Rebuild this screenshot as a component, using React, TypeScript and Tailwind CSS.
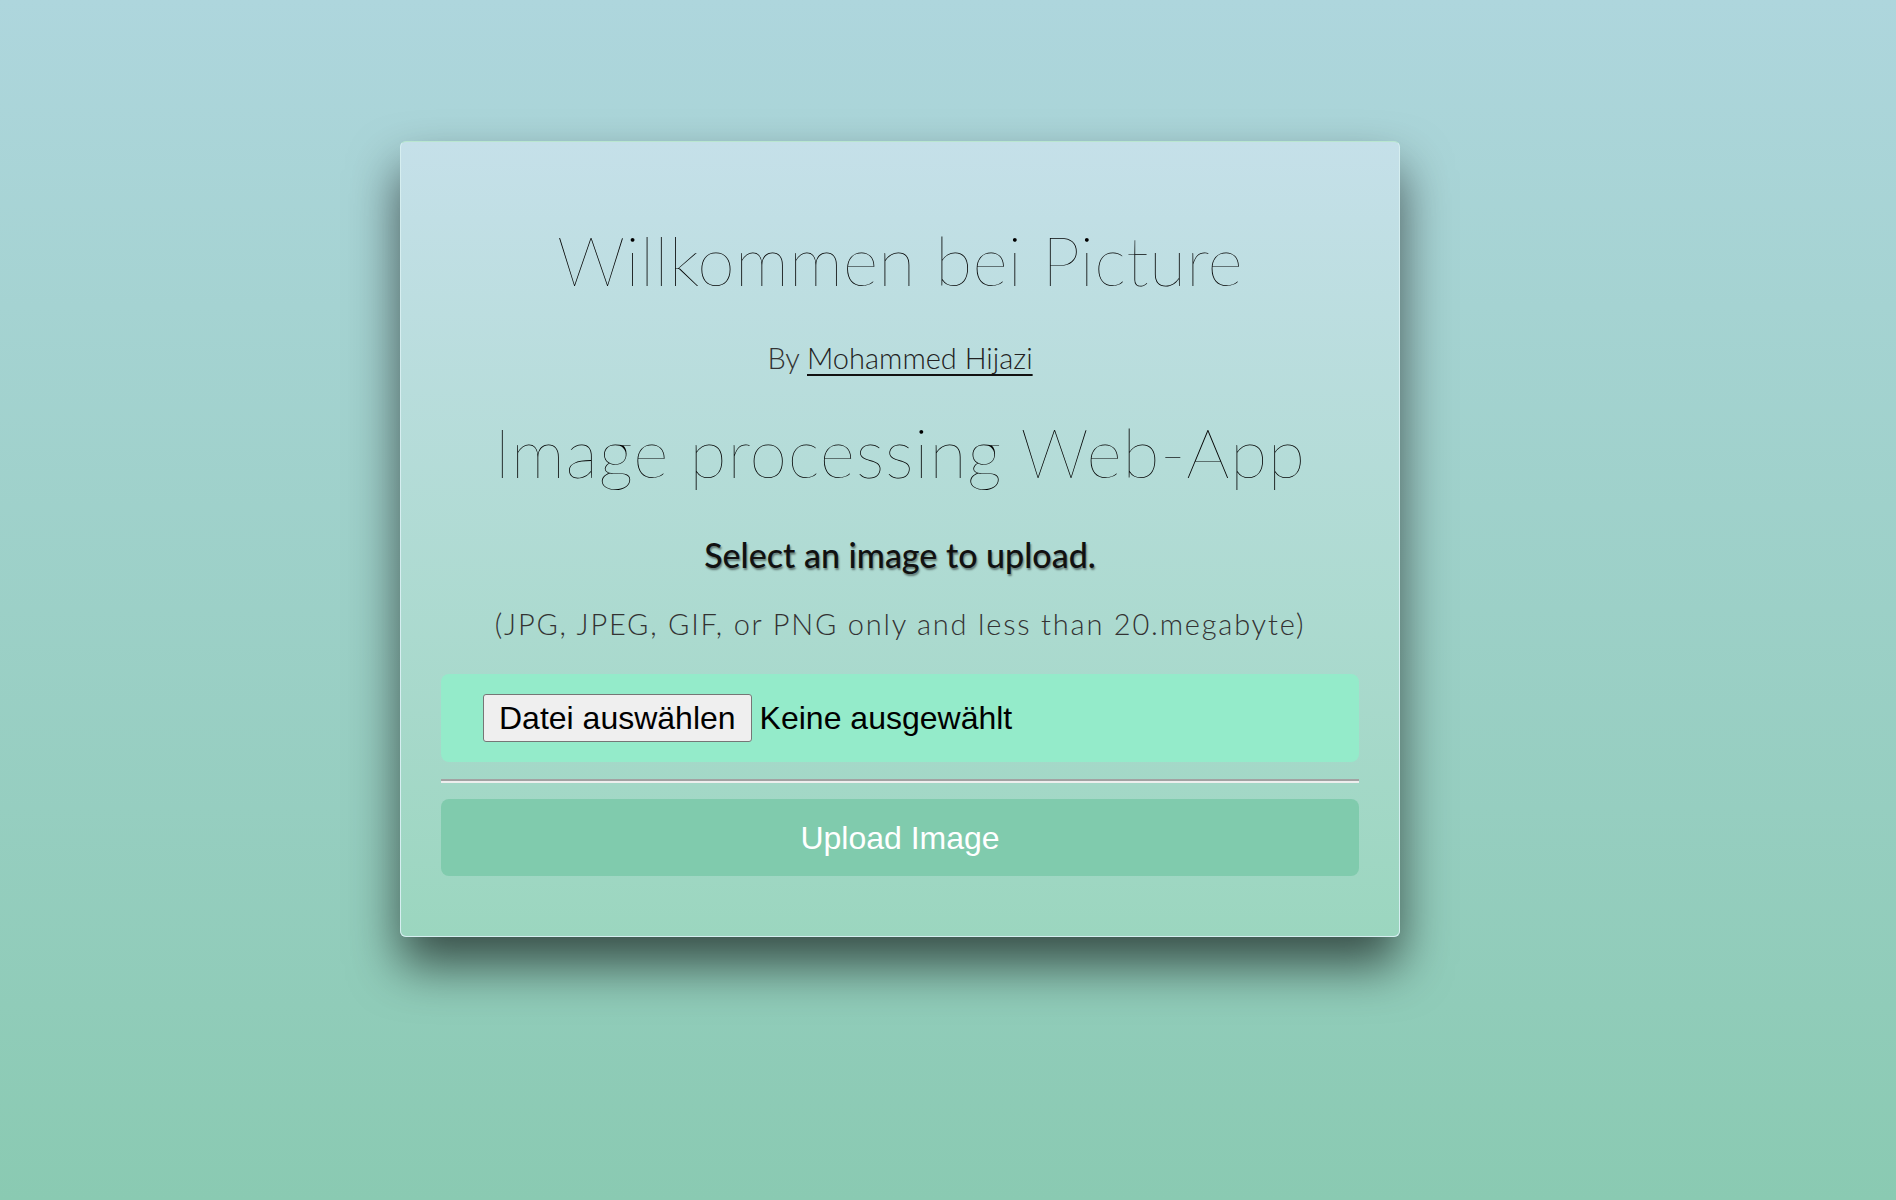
export default function App() {
  return (
    <div className="min-h-[1200px] w-full bg-gradient-to-b from-[#aed6dd] to-[#8acab2] pt-[141px] pl-[400px]" style={{ fontFamily: "Lato, 'Noto Sans', sans-serif" }}>
      <div className="w-[1000px] rounded-[6px] border border-[#d6eef0] border-t-[#b9e6d0] bg-gradient-to-b from-[#c5e0e9] to-[#9bd6bf] px-[40px] pt-[84px] pb-[60px] text-center shadow-[0_28px_50px_rgba(0,0,0,0.62)]">
        <h1 className="text-[68px] font-extralight leading-none tracking-[0.3px] text-black">
          Willkommen bei Picture
        </h1>
        <p className="mt-[49px] text-[29px] font-light leading-none text-[#333]">
          By{" "}
          <a href="#" className="text-[#222] underline decoration-[#111] underline-offset-[5px]">
            Mohammed Hijazi
          </a>
        </p>
        <h2 className="mt-[46px] text-[68px] font-extralight leading-none tracking-[0.9px] text-black">
          Image processing Web-App
        </h2>
        <p className="mt-[52px] text-[34px] font-medium leading-none text-[#111] [text-shadow:1px_2px_2px_rgba(0,0,0,0.45)]">
          Select an image to upload.
        </p>
        <p className="mt-[37px] text-[29px] font-light leading-none tracking-[1.8px] text-[#333]">
          (JPG, JPEG, GIF, or PNG only and less than 20.megabyte)
        </p>

        <div className="mt-[36px] flex h-[88px] items-center rounded-[8px] bg-[#94ebca] pl-[42px] text-left" style={{ fontFamily: "'Liberation Sans', Arial, sans-serif" }}>
          <button className="h-[48px] rounded-[3px] border border-[#767676] bg-[#efefef] px-[15px] text-[32px] leading-none text-black">
            Datei auswählen
          </button>
          <span className="ml-[8px] text-[32px] text-black">Keine ausgewählt</span>
        </div>

        <hr className="mt-[17px] h-0 border-0 border-t-2 border-b-2 border-t-[#a2a2a2] border-b-[#eeeeee]" />

        <button
          className="mt-[16px] flex h-[77px] w-full items-center justify-center rounded-[8px] bg-[#80cbad] text-[32px] text-white"
          style={{ fontFamily: "'Liberation Sans', Arial, sans-serif" }}
        >
          Upload Image
        </button>
      </div>
    </div>
  );
}
